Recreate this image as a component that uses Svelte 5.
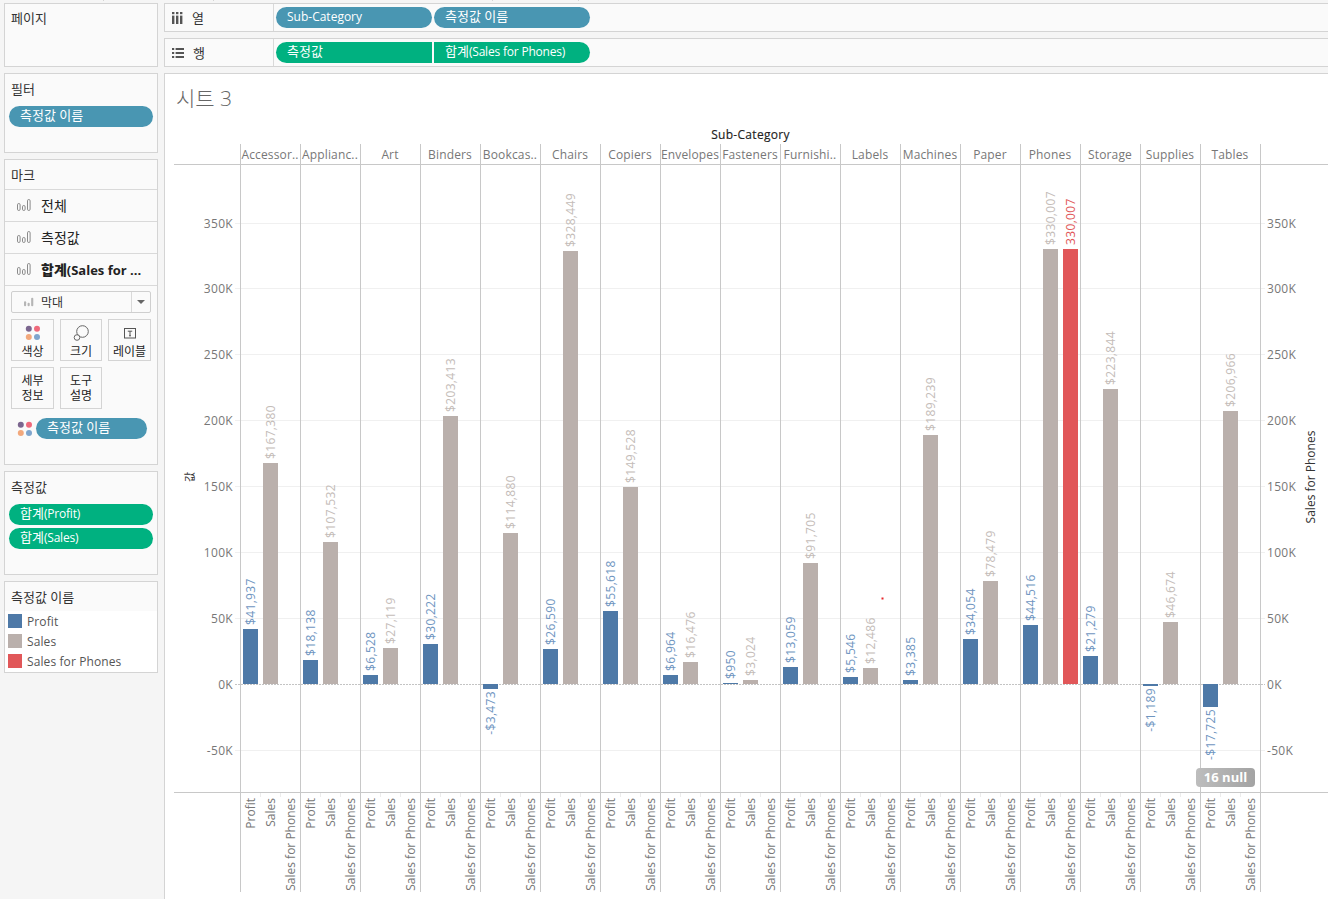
<script>
  const rows = [
    ['Accessor..', 41937, 167380], ['Applianc..', 18138, 107532], ['Art', 6528, 27119],
    ['Binders', 30222, 203413], ['Bookcas..', -3473, 114880], ['Chairs', 26590, 328449],
    ['Copiers', 55618, 149528], ['Envelopes', 6964, 16476], ['Fasteners', 950, 3024],
    ['Furnishi..', 13059, 91705], ['Labels', 5546, 12486], ['Machines', 3385, 189239],
    ['Paper', 34054, 78479], ['Phones', 44516, 330007, 330007], ['Storage', 21279, 223844],
    ['Supplies', -1189, 46674], ['Tables', -17725, 206966]
  ].map((r, i) => ({ name: r[0], profit: r[1], sales: r[2], phones: r[3], x: 240 + 60 * i }));

  const zero = 684;
  const k = 65.9 / 50000;
  const ticks = [
    { t: 350, y: 223 }, { t: 300, y: 288 }, { t: 250, y: 354 }, { t: 200, y: 420 }, { t: 150, y: 486 },
    { t: 100, y: 552 }, { t: 50, y: 618 }, { t: 0, y: 684 }, { t: -50, y: 750 }
  ];
  const money = (v) => (v < 0 ? '-$' : '$') + Math.abs(v).toLocaleString('en-US');
  const px = (v) => Math.round(v * k);
  const measureNames = ['Profit', 'Sales', 'Sales for Phones'];
  const dots = ['#7b668f', '#ef6a7c', '#f2a87c', '#7fa5cd'];
</script>

{#snippet barIcon()}
  <svg class="bar-icon" width="14" height="12" viewBox="0 0 14 12" fill="none" stroke="#8a8a8a">
    <rect x="0.5" y="4.5" width="2.6" height="7" rx="1.3" />
    <rect x="5.5" y="6.5" width="2.6" height="5" rx="1.3" />
    <rect x="10.5" y="0.5" width="2.6" height="11" rx="1.3" />
  </svg>
{/snippet}

{#snippet fourDots(size)}
  <svg width={size} height={size} viewBox="0 0 16 16">
    <circle cx="3.8" cy="3.8" r="3" fill={dots[0]} />
    <circle cx="12" cy="3.8" r="3" fill={dots[1]} />
    <circle cx="3.8" cy="12" r="3" fill={dots[2]} />
    <circle cx="12" cy="12" r="3" fill={dots[3]} />
  </svg>
{/snippet}

<div class="page">
  <aside class="side">
    <section class="card pages"><h3>페이지</h3></section>
    <section class="card filters">
      <h3>필터</h3>
      <div class="pill blue ko">측정값 이름</div>
    </section>
    <section class="card marks">
      <h3 class="marks-title">마크</h3>
      <div class="mark-row up">{@render barIcon()}<span>전체</span></div>
      <div class="mark-row up">{@render barIcon()}<span>측정값</span></div>
      <div class="mark-row active">{@render barIcon()}<span><b>합계</b>(Sales for ...</span></div>
      <div class="select">
        <span class="select-label">
          <svg width="10" height="10" viewBox="0 0 14 12" fill="#b5b5b5"><rect x="0" y="5" width="3" height="7" rx="1.4" /><rect x="5" y="7" width="3" height="5" rx="1.4" /><rect x="10" y="0" width="3" height="12" rx="1.4" /></svg>
          막대
        </span>
        <span class="select-arrow"></span>
      </div>
      <div class="btn-grid">
        <div class="mbtn">
          <span class="mbtn-icon">{@render fourDots(16)}</span>
          <span>색상</span>
        </div>
        <div class="mbtn">
          <span class="mbtn-icon">
            <svg width="16" height="16" viewBox="0 0 16 16" fill="none" stroke="#666"><circle cx="9.5" cy="6.5" r="5.8" /><circle cx="4" cy="12.5" r="2.8" fill="#fafafa" /></svg>
          </span>
          <span>크기</span>
        </div>
        <div class="mbtn">
          <span class="mbtn-icon">
            <svg width="14" height="14" viewBox="0 0 14 14" fill="none" stroke="#555"><rect x="1.5" y="2.5" width="11" height="9.5" /><path d="M4.8 5.2h4.4M7 5.2v4.6M6 9.8h2" /></svg>
          </span>
          <span>레이블</span>
        </div>
        <div class="mbtn two"><span>세부</span><span>정보</span></div>
        <div class="mbtn two"><span>도구</span><span>설명</span></div>
      </div>
      <div class="enc">
        {@render fourDots(16)}
        <div class="pill blue enc-pill ko">측정값 이름</div>
      </div>
    </section>
    <section class="card measures">
      <h3>측정값</h3>
      <div class="pill green mix"><span class="ko">합계</span>(Profit)</div>
      <div class="pill green mix"><span class="ko">합계</span>(Sales)</div>
    </section>
    <section class="card legend">
      <h3 class="legend-title">측정값 이름</h3>
      <ul>
        <li><i class="sw s-profit"></i>Profit</li>
        <li><i class="sw s-sales"></i>Sales</li>
        <li><i class="sw s-phones"></i>Sales for Phones</li>
      </ul>
    </section>
  </aside>

  <main class="main">
    <div class="shelf">
      <div class="shelf-label">
        <svg width="11" height="12" viewBox="0 0 11 12" fill="#555"><rect x="0" y="0" width="2.4" height="2.2" /><rect x="4" y="0" width="2.4" height="2.2" /><rect x="8" y="0" width="2.4" height="2.2" /><rect x="0" y="3.6" width="2.4" height="8.4" /><rect x="4" y="3.6" width="2.4" height="8.4" /><rect x="8" y="3.6" width="2.4" height="8.4" /></svg>
        <span class="ko">열</span>
      </div>
      <div class="shelf-pills">
        <div class="pill blue wide">Sub-Category</div>
        <div class="pill blue wide ko">측정값 이름</div>
      </div>
    </div>
    <div class="shelf">
      <div class="shelf-label">
        <svg width="12" height="10" viewBox="0 0 12 10" fill="#555"><rect x="0" y="0" width="2.2" height="2" /><rect x="0" y="4" width="2.2" height="2" /><rect x="0" y="8" width="2.2" height="2" /><rect x="3.6" y="0" width="8.4" height="2" /><rect x="3.6" y="4" width="8.4" height="2" /><rect x="3.6" y="8" width="8.4" height="2" /></svg>
        <span class="ko">행</span>
      </div>
      <div class="shelf-pills">
        <div class="pill green wide join-l ko">측정값</div>
        <div class="pill green wide join-r mix"><span class="ko">합계</span>(Sales for Phones)</div>
      </div>
    </div>
    <section class="view">
      <h1>시트 3</h1>
      <div class="chart">
        <svg width="1163" height="779" viewBox="165 120 1163 779">
          <text class="col-title" x="750.5" y="139" text-anchor="middle">Sub-Category</text>

          {#each ticks as { t, y }}
            {#if t !== 0}
              <line class="grid" x1="235" x2="1265" y1={y + 0.5} y2={y + 0.5} />
            {/if}
            <text class="tick" x="233" y={y + 5} text-anchor="end">{t}K</text>
            <text class="tick" x="1267" y={y + 5}>{t}K</text>
          {/each}
          <line class="zero" x1="235" x2="1265" y1="684.5" y2="684.5" />

          <line class="rule" x1="174" x2="1328" y1="164.5" y2="164.5" />
          <line class="rule" x1="174" x2="1328" y1="792.5" y2="792.5" />

          {#each rows as r}
            <line class="rule" x1={r.x + 0.5} x2={r.x + 0.5} y1="144" y2="892" />
            <line class="minor" x1={r.x + 20.5} x2={r.x + 20.5} y1="793" y2="797" />
            <line class="minor" x1={r.x + 40.5} x2={r.x + 40.5} y1="793" y2="797" />
            <text class="head" x={r.x + 30} y="159" text-anchor="middle">{r.name}</text>

            <rect class="b-profit" x={r.x + 3} width="15"
              y={r.profit >= 0 ? zero - px(r.profit) : zero}
              height={Math.max(1, px(Math.abs(r.profit)))} />
            <rect class="b-sales" x={r.x + 23} width="15" y={zero - px(r.sales)} height={px(r.sales)} />
            {#if r.phones}
              <rect class="b-phones" x={r.x + 43} width="15" y={zero - px(r.phones)} height={px(r.phones)} />
              <text class="lab l-phones"
                transform="translate({r.x + 54.5},{zero - px(r.phones) - 4}) rotate(-90)">{r.phones.toLocaleString('en-US')}</text>
            {/if}

            <text class="lab l-profit" text-anchor={r.profit >= 0 ? 'start' : 'end'}
              transform="translate({r.x + 14.5},{r.profit >= 0 ? zero - px(r.profit) - 4 : zero + px(-r.profit) + 2}) rotate(-90)">{money(r.profit)}</text>
            <text class="lab l-sales"
              transform="translate({r.x + 34.5},{zero - px(r.sales) - 4}) rotate(-90)">{money(r.sales)}</text>

            {#each measureNames as m, j}
              <text class="meas" text-anchor="end"
                transform="translate({r.x + 14.5 + j * 20},798) rotate(-90)">{m}</text>
            {/each}
          {/each}
          <line class="rule" x1="1260.5" x2="1260.5" y1="144" y2="892" />

          <rect x="881.5" y="597.5" width="2" height="2" fill="#e8262b" />

          <text class="axis-l" transform="translate(194,477) rotate(-90)" text-anchor="middle">값</text>
          <text class="axis-r" transform="translate(1315,477) rotate(-90)" text-anchor="middle">Sales for Phones</text>
        </svg>
        <div class="nullpill">16 null</div>
      </div>
    </section>
  </main>
</div>

<style>
  :global(body) {
    margin: 0;
    background: #f5f5f5;
  }
  .page {
    display: flex;
    gap: 6px;
    height: 899px;
    width: 1328px;
    overflow: hidden;
    box-sizing: border-box;
    padding: 3px 0 0 4px;
    font-family: "Open Sans", "Noto Sans CJK KR", sans-serif;
    font-size: 12px;
    color: #333;
    background:
      linear-gradient(#d4d4d4, #d4d4d4) 103px 0 / 1px 1px no-repeat,
      linear-gradient(#d4d4d4, #d4d4d4) 213px 0 / 1px 1px no-repeat,
      linear-gradient(#d4d4d4, #d4d4d4) 492px 0 / 1px 1px no-repeat,
      linear-gradient(#d4d4d4, #d4d4d4) 578px 0 / 1px 1px no-repeat;
  }
  .side {
    width: 154px;
    flex: none;
    display: flex;
    flex-direction: column;
    gap: 6px;
  }
  .card {
    box-sizing: border-box;
    background: #fafafa;
    border: 1px solid #d4d4d4;
    padding: 0 4px;
  }
  .ko { font-size: 13px; }
  h3 {
    margin: 0;
    font-size: 13px;
    font-weight: 400;
    line-height: 16px;
    padding: 7px 0 0 2px;
    color: #333;
  }
  .pages h3 { padding-top: 6px; }
  .pages { height: 64px; }
  .filters { height: 80px; }
  .filters h3 { padding-bottom: 9px; }
  .marks { height: 306px; padding: 0; }
  .measures { height: 104px; }
  .measures h3 { padding-bottom: 9px; }
  .legend { height: 92px; padding: 0; background: #fff; }

  .pill {
    height: 21px;
    line-height: 19px;
    border-radius: 11px;
    color: #fff;
    font-size: 12px;
    padding-left: 11px;
    box-sizing: border-box;
    white-space: nowrap;
  }
  .pill.ko { font-size: 13px; line-height: 18px; }
  .pill.green.ko { line-height: 19px; }
  .pill.mix { letter-spacing: -0.2px; }
  .pill.mix .ko { letter-spacing: 0; }
  .blue { background: #4996b2; }
  .green { background: #00b180; }
  .green + .green { margin-top: 3px; }

  .marks-title {
    height: 30px;
    box-sizing: border-box;
    padding: 7px 0 0 6px;
    border-bottom: 1px solid #d9d9d9;
  }
  .mark-row {
    height: 32px;
    box-sizing: border-box;
    display: flex;
    align-items: center;
    padding-left: 12px;
    border-bottom: 1px solid #d9d9d9;
    font-size: 14px;
    color: #222;
  }
  .mark-row.up { padding-bottom: 2px; }
  .mark-row span { margin-left: 10px; }
  .bar-icon { flex: none; }
  .active { font-weight: 700; font-size: 13px; padding-bottom: 1px; }
  .active b { font-size: 14px; }
  .select {
    margin: 5px 6px 0;
    height: 22px;
    box-sizing: border-box;
    border: 1px solid #cfcfcf;
    border-radius: 2px;
    display: flex;
    align-items: center;
    justify-content: space-between;
    font-size: 12px;
  }
  .select-label { display: flex; align-items: center; gap: 7px; padding-left: 12px; }
  .select-arrow {
    width: 18px;
    height: 20px;
    border-left: 1px solid #d9d9d9;
    position: relative;
  }
  .select-arrow::after {
    content: "";
    position: absolute;
    left: 5px;
    top: 8px;
    border: 4px solid transparent;
    border-top: 4px solid #666;
    border-bottom: 0;
  }
  .btn-grid {
    display: grid;
    grid-template-columns: 43px 42px 43px;
    grid-auto-rows: 42px;
    gap: 6px;
    margin: 6px 0 0 6px;
  }
  .mbtn {
    box-sizing: border-box;
    border: 1px solid #d4d4d4;
    display: flex;
    flex-direction: column;
    align-items: center;
    justify-content: flex-end;
    font-size: 12px;
    line-height: 15px;
    color: #222;
    padding-bottom: 1px;
  }
  .mbtn.two { justify-content: center; padding: 0; }
  .mbtn-icon { height: 20px; display: flex; align-items: center; margin-bottom: 1px; }
  .enc {
    display: flex;
    align-items: center;
    gap: 3px;
    margin: 9px 0 0 12px;
  }
  .enc-pill { width: 111px; }

  .legend-title {
    height: 29px;
    box-sizing: border-box;
    background: #fafafa;
    padding: 7px 0 0 6px;
  }
  ul { list-style: none; margin: 0; padding: 0 0 0 3px; }
  li {
    display: flex;
    align-items: center;
    height: 20px;
    color: #555;
    gap: 5px;
    letter-spacing: 0.1px;
  }
  .sw { width: 14px; height: 14px; display: block; }
  .s-profit { background: #4e79a7; }
  .s-sales { background: #bab0ac; }
  .s-phones { background: #e15759; }

  .main {
    flex: 1;
    min-width: 0;
    display: flex;
    flex-direction: column;
    gap: 6px;
  }
  .shelf {
    height: 29px;
    flex: none;
    box-sizing: border-box;
    background: #fafafa;
    border: 1px solid #d4d4d4;
    border-right: 0;
    display: flex;
  }
  .shelf-label {
    width: 109px;
    flex: none;
    box-sizing: border-box;
    border-right: 1px solid #d9d9d9;
    display: flex;
    align-items: center;
    gap: 9px;
    padding-left: 7px;
  }
  .shelf-pills {
    display: flex;
    gap: 2px;
    padding: 3px 0 0 2px;
  }
  .wide { width: 156px; }
  .join-l { border-radius: 11px 0 0 11px; }
  .join-r { border-radius: 0 11px 11px 0; }
  .green.join-r { margin-top: 0; }

  .view {
    flex: 1;
    min-height: 0;
    box-sizing: border-box;
    background: #fff;
    border: 1px solid #d4d4d4;
    border-right: 0;
    border-bottom: 0;
  }
  h1 {
    margin: 0;
    height: 46px;
    box-sizing: border-box;
    padding: 10px 0 0 11px;
    font-size: 21px;
    line-height: 28px;
    font-weight: 300;
    color: #666;
  }
  .chart { position: relative; }
  .chart svg { display: block; }
  text { font-family: "Open Sans", "Noto Sans CJK KR", sans-serif; font-size: 12px; }
  .col-title { fill: #222; font-weight: 400; letter-spacing: 0.3px; stroke: #222; stroke-width: 0.15px; }
  .tick { fill: #777; letter-spacing: 0.3px; }
  .head { fill: #777; letter-spacing: 0.15px; }
  .meas { fill: #777; }
  .axis-r { fill: #333; }
  .axis-l { fill: #333; font-size: 11px; }
  .grid { stroke: #f0f0f0; stroke-width: 1; }
  .zero { stroke: #c4c4c4; stroke-width: 1; stroke-dasharray: 2 1; }
  .rule { stroke: #c8c8c8; stroke-width: 1; }
  .minor { stroke: #ececec; stroke-width: 1; }
  .b-profit { fill: #4e79a7; }
  .b-sales { fill: #bab0ac; }
  .b-phones { fill: #e15759; }
  .lab { letter-spacing: 0.35px; }
  .l-profit { fill: #6f95bf; }
  .l-sales { fill: #c4bcb8; }
  .l-phones { fill: #e15759; }
  .nullpill {
    position: absolute;
    left: 1031px;
    top: 648px;
    width: 59px;
    height: 19px;
    line-height: 19px;
    border-radius: 4px;
    text-align: center;
    color: #fff;
    font-weight: 700;
    font-size: 13px;
    background: linear-gradient(90deg, #bdbdbd, #a3a3a3);
  }
</style>
